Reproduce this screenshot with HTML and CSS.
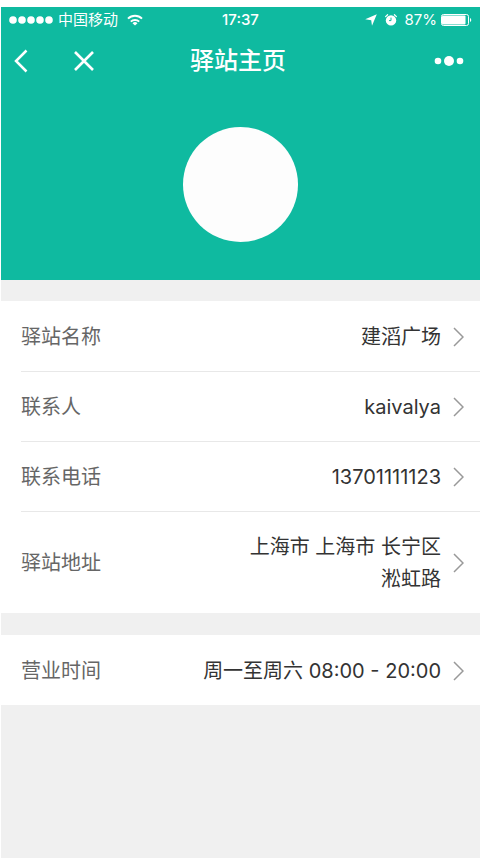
FILE: index.html
```html
<!DOCTYPE html>
<html lang="zh-CN">
<head>
<meta charset="utf-8">
<meta name="viewport" content="width=device-width, initial-scale=1">
<title>驿站主页</title>
<link rel="stylesheet" href="styles.css">
</head>
<body>
<div class="screen">
  <header class="hero">
    <div class="status">
      <div class="status-left">
        <svg class="signal" width="44" height="8" viewBox="0 0 44 8" fill="currentColor" aria-hidden="true"><circle cx="4" cy="4" r="3.8"/><circle cx="13" cy="4" r="3.8"/><circle cx="22" cy="4" r="3.8"/><circle cx="31" cy="4" r="3.8"/><circle cx="40" cy="4" r="3.8"/></svg>
        <span>中国移动</span>
        <svg class="wifi" width="16" height="12" viewBox="0 0 16 12" fill="none" stroke="currentColor" stroke-width="2" aria-hidden="true"><path d="M1 4.600a10 10 0 0 1 14 0M3.800 7.600a6 6 0 0 1 8.400 0"/><path d="M8 11.600 5.500 9.200a3.600 3.600 0 0 1 5 0z" fill="currentColor" stroke="none"/></svg>
      </div>
      <span class="clock">17:37</span>
      <div class="status-right">
        <svg width="12" height="12" viewBox="0 0 12 12" fill="currentColor" aria-hidden="true"><path d="M11.800.2 7 11.800 6.200 6.200.2 5.200z"/></svg>
        <svg width="12" height="12" viewBox="0 0 12 12" fill="none" aria-hidden="true"><circle cx="6" cy="6.400" r="5.200" fill="currentColor"/><path d="M.6 2.600 2.600.7M11.400 2.600 9.400.7" stroke="currentColor" stroke-width="1.200" stroke-linecap="round"/><path d="M6 3.600v3H4" stroke="#0fbaa0"/></svg>
        <span class="charge">87%<svg width="31" height="12" viewBox="0 0 31 12" fill="none" aria-hidden="true"><rect x=".5" y=".5" width="27" height="11" rx="2" stroke="currentColor"/><rect x="1" y="1.500" width="23.500" height="9" rx="1" fill="currentColor"/><path d="M29 4a2.200 2.200 0 0 1 0 4z" fill="currentColor"/></svg></span>
      </div>
    </div>
    <nav class="nav">
      <div class="nav-left">
        <button type="button" aria-label="返回"><svg width="16" height="24" viewBox="0 0 16 24" fill="none" stroke="currentColor" stroke-width="2.500"><path d="M14.500 1.500 4 12l10.500 10.500"/></svg></button>
        <button type="button" aria-label="关闭"><svg width="20" height="20" viewBox="0 0 20 20" fill="none" stroke="currentColor" stroke-width="2.600"><path d="m1 1 18 18M19 1 1 19"/></svg></button>
      </div>
      <h1>驿站主页</h1>
      <button class="more" type="button" aria-label="更多"><svg width="30" height="10" viewBox="0 0 30 10" fill="currentColor"><circle cx="4" cy="5" r="3.300"/><circle cx="15" cy="5" r="5"/><circle cx="26" cy="5" r="3.300"/></svg></button>
    </nav>
    <div class="avatar"></div>
  </header>
  <main>
    <section class="group">
      <a class="row" href="#name"><span class="label">驿站名称</span><span class="value">建滔广场</span><svg class="arrow" viewBox="0 0 12 20"><path d="m2 1 9 9-9 9"/></svg></a>
      <a class="row" href="#contact"><span class="label">联系人</span><span class="value">kaivalya</span><svg class="arrow" viewBox="0 0 12 20"><path d="m2 1 9 9-9 9"/></svg></a>
      <a class="row" href="#phone"><span class="label">联系电话</span><span class="value">13701111123</span><svg class="arrow" viewBox="0 0 12 20"><path d="m2 1 9 9-9 9"/></svg></a>
      <a class="row" href="#address"><span class="label">驿站地址</span><span class="value">上海市 上海市 长宁区<br>淞虹路</span><svg class="arrow" viewBox="0 0 12 20"><path d="m2 1 9 9-9 9"/></svg></a>
    </section>
    <section class="group">
      <a class="row" href="#hours"><span class="label">营业时间</span><span class="value">周一至周六 08:00 - 20:00</span><svg class="arrow" viewBox="0 0 12 20"><path d="m2 1 9 9-9 9"/></svg></a>
    </section>
  </main>
</div>
</body>
</html>
```

FILE: styles.css
```css
* {
  box-sizing: border-box;
}

body {
  margin: 0;
  padding: 7px 0 7px 1px;
  min-height: 100vh;
  display: flex;
  background: #fff;
  font-family: Inter, "Noto Sans CJK SC", sans-serif;
  font-size: 20px;
  line-height: 32px;
  color: #333;
}

.screen {
  flex: 1;
  background: #f0f0f0;
}

.hero {
  padding-bottom: 38px;
  background: #0fbaa0;
  color: #fff;
}

.status,
.nav {
  display: grid;
  grid-template-columns: 1fr auto 1fr;
  align-items: center;
}

.status {
  height: 26px;
  padding: 0 8px;
  font-size: 15px;
  line-height: 26px;
}

.status-left,
.status-right,
.charge {
  display: flex;
  align-items: center;
}

.status-left {
  gap: 5px;
}

.status-right {
  justify-content: flex-end;
  gap: 8px;
}

.charge {
  gap: 4px;
}

.clock {
  font-weight: 500;
}

.wifi {
  margin-left: 4px;
}

.nav {
  height: 56px;
  padding: 0 16px 0 11px;
}

.nav-left {
  display: flex;
  align-items: center;
  gap: 46px;
}

.nav h1 {
  margin: 0;
  font-size: 24px;
  font-weight: 500;
  line-height: 32px;
}

button {
  display: flex;
  padding: 0;
  border: 0;
  background: none;
  color: inherit;
}

.more {
  justify-self: end;
}

.avatar {
  width: 115px;
  height: 115px;
  margin: 38px auto 0;
  border-radius: 50%;
  background: #fdfdfd;
}

.group {
  margin-top: 21px;
  padding-left: 20px;
  background: #fff;
}

.group + .group {
  margin-top: 22px;
}

.row {
  display: flex;
  align-items: center;
  padding: 20px 16px 18px 0;
  color: inherit;
  text-decoration: none;
}

.row + .row {
  border-top: 1px solid #e8e8e8;
  padding-top: 19px;
}

.label {
  color: #666;
}

.value {
  flex: 1;
  text-align: right;
}

.arrow {
  width: 12px;
  height: 20px;
  margin-left: 11px;
  fill: none;
  stroke: #999;
  stroke-width: 1.5;
}
```
